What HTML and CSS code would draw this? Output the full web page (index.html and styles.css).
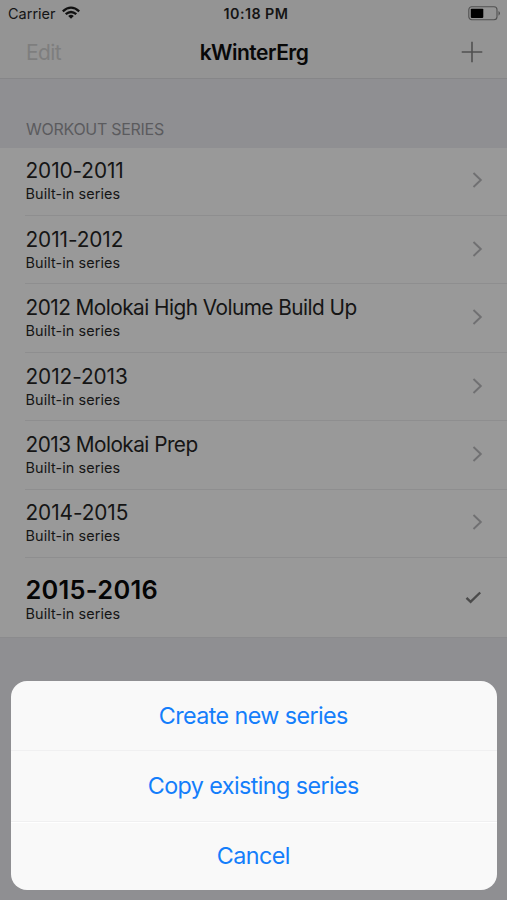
FILE: index.html
```html
<!DOCTYPE html>
<html lang="en">
<head>
<meta charset="utf-8">
<title>kWinterErg</title>
<link rel="stylesheet" href="styles.css">
</head>
<body>
<main class="screen">
  <header class="top">
    <div class="status">
      <div class="carrier"><span>Carrier</span>
        <svg width="18" height="14" viewBox="0 0 18 14"><g fill="none" stroke="#111" stroke-width="2.3"><path d="M.8 5.3Q9-2 17.2 5.3"/><path d="M3.7 8.2Q9 3.7 14.3 8.2"/></g><path d="M6.2 9.9Q9 7.7 11.8 9.9L9 12.8Z" fill="#111"/></svg>
      </div>
      <span class="time">10:18 PM</span>
      <svg class="battery" width="33" height="15" viewBox="0 0 33 15"><rect x=".8" y=".8" width="28.2" height="13" rx="3" fill="none" stroke="#505050" stroke-width="1.1"/><rect x="2.8" y="2.7" width="12.5" height="9.2" rx=".8" fill="#000"/><path d="M30.5 5v4.7q1.5-.8 1.5-2.35T30.5 5Z" fill="#505050"/></svg>
    </div>
    <nav class="nav">
      <span class="edit">Edit</span>
      <h1 class="heading">kWinterErg</h1>
      <svg class="plus" width="22" height="22" viewBox="0 0 22 22"><path d="M11 .7v20.6M.7 11h20.6" stroke="#505050" stroke-width="1.6"/></svg>
    </nav>
  </header>
  <h2 class="section"><span>WORKOUT SERIES</span></h2>
  <ul class="list">
    <li class="row"><div class="copy"><span class="title years">2010-2011</span><span class="sub">Built-in series</span></div><svg class="chevron" width="11" height="18" viewBox="0 0 11 18"><path d="M1.5 2 8.8 9 1.5 16"/></svg></li>
    <li class="row"><div class="copy"><span class="title years">2011-2012</span><span class="sub">Built-in series</span></div><svg class="chevron" width="11" height="18" viewBox="0 0 11 18"><path d="M1.5 2 8.8 9 1.5 16"/></svg></li>
    <li class="row"><div class="copy"><span class="title">2012 Molokai High Volume Build Up</span><span class="sub">Built-in series</span></div><svg class="chevron" width="11" height="18" viewBox="0 0 11 18"><path d="M1.5 2 8.8 9 1.5 16"/></svg></li>
    <li class="row"><div class="copy"><span class="title years">2012-2013</span><span class="sub">Built-in series</span></div><svg class="chevron" width="11" height="18" viewBox="0 0 11 18"><path d="M1.5 2 8.8 9 1.5 16"/></svg></li>
    <li class="row"><div class="copy"><span class="title">2013 Molokai Prep</span><span class="sub">Built-in series</span></div><svg class="chevron" width="11" height="18" viewBox="0 0 11 18"><path d="M1.5 2 8.8 9 1.5 16"/></svg></li>
    <li class="row"><div class="copy"><span class="title years">2014-2015</span><span class="sub">Built-in series</span></div><svg class="chevron" width="11" height="18" viewBox="0 0 11 18"><path d="M1.5 2 8.8 9 1.5 16"/></svg></li>
    <li class="row selected"><div class="copy"><span class="title">2015-2016</span><span class="sub">Built-in series</span></div><svg class="check" width="17" height="13" viewBox="0 0 17 13"><path d="M1.5 6.9 5.6 10.8 15.2 1.5" fill="none" stroke="#4b4b4b" stroke-width="2.4"/></svg></li>
  </ul>
  <div class="sheet">
    <button class="action">Create new series</button>
    <button class="action">Copy existing series</button>
    <button class="action cancel">Cancel</button>
  </div>
</main>
</body>
</html>
```
FILE: styles.css
```css
* { box-sizing: border-box; }
body { margin: 0; background: #8f8f92; font-family: Inter, "Liberation Sans", sans-serif; color: #151515; }
svg { display: block; flex: none; }
.screen { width: 507px; height: 900px; overflow: hidden; display: flex; flex-direction: column; }
.top { height: 79px; flex: none; background: #949494; border-bottom: 1px solid #868688; }
.status { height: 27px; padding: 0 7px 0 8px; display: grid; grid-template-columns: 1fr auto 1fr; align-items: center; font-size: 14.5px; }
.carrier { display: flex; gap: 6px; align-items: center; }
.carrier svg { margin-top: -1px; }
.time { font-size: 14.3px; font-weight: 600; letter-spacing: .45px; margin-left: 4px; }
.battery { justify-self: end; margin-right: -1px; }
.nav { height: 51px; padding: 0 24px 0 26px; display: grid; grid-template-columns: 1fr auto 1fr; align-items: center; }
.edit { font-size: 21px; letter-spacing: -.6px; color: #7e7e7e; }
.heading { margin: 0 1px 0 0; font-size: 21px; letter-spacing: -.5px; font-weight: 600; color: #080808; }
.plus { justify-self: end; margin-bottom: 2px; }
.section { height: 68.7px; flex: none; margin: 0; padding: 40px 26px 0; font-size: 16px; line-height: 20px; letter-spacing: -.28px; font-weight: 400; color: #5b5b5e; }
.list { margin: 0; padding: 0; list-style: none; background: #999; flex: none; }
.row { height: 68.4px; padding: 10.65px 24px 0 25.5px; display: flex; justify-content: space-between; background: linear-gradient(#8e8e8f, #8e8e8f) 25px 100% / 100% 1px no-repeat; }
.copy { display: flex; flex-direction: column; align-items: flex-start; }
.title { font-size: 20.8px; line-height: 25px; letter-spacing: -.54px; white-space: nowrap; }
.years { letter-spacing: -.08px; }
.sub { font-size: 14.4px; line-height: 20px; letter-spacing: .1px; margin-top: 1px; }
.chevron { margin-top: 13px; fill: none; stroke: #707072; stroke-width: 1.9; }
.selected { height: 79.5px; padding-top: 17px; background: none; border-bottom: 1px solid #8b8b8d; }
.selected .title { font-size: 25.4px; line-height: 30px; letter-spacing: .27px; font-weight: 600; color: #050505; }
.selected .sub { margin-top: -1px; }
.check { margin: 16px 1px 0 0; }
.sheet { flex: none; width: 486px; height: 209px; margin: 43.5px 0 0 11px; background: #f9f9f9; border-radius: 16px; overflow: hidden; display: grid; grid-template-rows: 70px 70.5px 1fr; }
.action { border: 0; border-bottom: 1px solid #f0f0f1; padding: 0 1.5px 0 0; background: none; color: #147efb; font: 400 23.3px Inter, "Liberation Sans", sans-serif; letter-spacing: -.58px; }
.cancel { border: 0; border-top: 1px solid #fff; padding-bottom: 2px; }
```
